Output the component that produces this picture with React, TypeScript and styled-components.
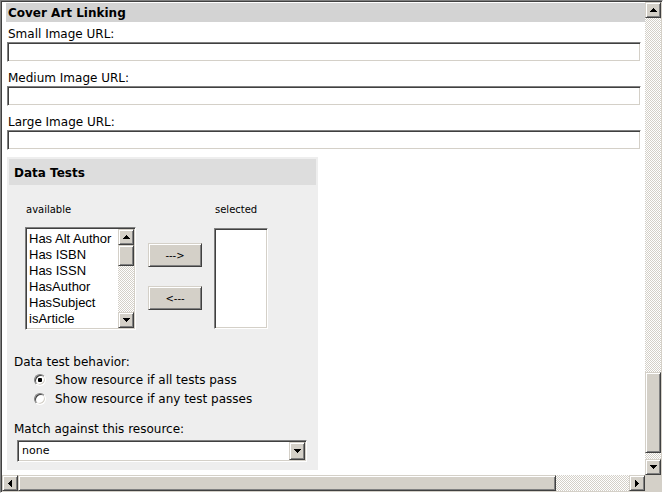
import styled, { createGlobalStyle } from "styled-components";

const GlobalStyle = createGlobalStyle`
  html, body {
    margin: 0;
    padding: 0;
    background: #d4d0c8;
  }
  body {
    width: 663px;
    height: 493px;
    overflow: hidden;
  }
`;

const bevelOut = `
  background-color: #d4d0c8;
  border: 1px solid;
  border-color: #d4d0c8 #404040 #404040 #d4d0c8;
  box-shadow: inset 1px 1px 0 #ffffff, inset -1px -1px 0 #808080;
`;

const bevelIn = `
  border: 1px solid;
  border-color: #808080 #ffffff #ffffff #808080;
  box-shadow: inset 1px 1px 0 #404040, inset -1px -1px 0 #d4d0c8;
`;

const Frame = styled.div`
  box-sizing: border-box;
  width: 663px;
  height: 493px;
  padding: 1px;
  ${bevelIn}
  display: grid;
  grid-template-columns: 1fr 16px;
  grid-template-rows: 1fr 16px;
  background: #d4d0c8;
`;

const Page = styled.div`
  background: #ffffff;
  overflow: hidden;
  padding: 1px 0 0 4px;
  font-family: "DejaVu Sans", Verdana, sans-serif;
  font-size: 12px;
  color: #000000;
`;

const SectionTitle = styled.div`
  background: #d3d3d3;
  font-weight: bold;
  height: 17px;
  padding: 2px 0 0 2px;
  line-height: 17px;
`;

const Fields = styled.div`
  display: flex;
  flex-direction: column;
  gap: 7px;
  padding-top: 3px;
`;

const FieldLabel = styled.div`
  line-height: 16px;
  padding: 1px 0 0 2px;
`;

const TextInput = styled.input`
  display: block;
  box-sizing: border-box;
  width: 634px;
  height: 20px;
  margin: 0 0 0 1px;
  padding: 0 3px;
  background: #ffffff;
  outline: none;
  ${bevelIn}
`;

const Panel = styled.div`
  width: 311px;
  box-sizing: border-box;
  margin: 7px 0 0 1px;
  padding: 2px 2px 8px;
  background: #eeeeee;
`;

const PanelTitle = styled.div`
  background: #dddddd;
  font-weight: bold;
  height: 26px;
  line-height: 28px;
  padding-left: 5px;
`;

const Transfer = styled.div`
  display: grid;
  grid-template-columns: 111px 54px 54px;
  column-gap: 12px;
  row-gap: 11px;
  padding: 19px 0 0 16px;
`;

const SmallLabel = styled.div`
  font-size: 10px;
  line-height: 12px;
  padding-left: 1px;
`;

const ListBox = styled.div`
  box-sizing: border-box;
  width: 111px;
  height: 103px;
  background: #ffffff;
  ${bevelIn}
  padding: 1px;
  display: flex;
`;

const ListItems = styled.div`
  flex: 1;
  overflow: hidden;
  padding: 2px 0 0 2px;
  font-family: "Liberation Sans", Arial, sans-serif;
  font-size: 13px;
  line-height: 16px;
  white-space: nowrap;
`;

const EmptyList = styled.div`
  box-sizing: border-box;
  width: 54px;
  height: 101px;
  margin-top: 1px;
  background: #ffffff;
  ${bevelIn}
`;

const MoveButtons = styled.div`
  display: flex;
  flex-direction: column;
  gap: 19px;
  padding-top: 16px;
`;

const MoveButton = styled.button`
  box-sizing: border-box;
  width: 54px;
  height: 24px;
  padding: 0;
  ${bevelOut}
  font-family: "DejaVu Sans", Verdana, sans-serif;
  font-size: 10px;
  color: #000000;
`;

const Options = styled.div`
  padding: 24px 0 0 5px;
`;

const OptionTitle = styled.div`
  line-height: 16px;
`;

const RadioRow = styled.label`
  display: flex;
  align-items: center;
  gap: 9px;
  height: 19px;
  padding-left: 20px;
`;

const Radio = styled.span<{ $checked?: boolean }>`
  box-sizing: border-box;
  width: 12px;
  height: 12px;
  border-radius: 50%;
  border: 1px solid;
  border-color: #808080 #ffffff #ffffff #808080;
  box-shadow: inset 1px 1px 0 #404040, inset -1px -1px 0 #d4d0c8;
  background: ${(p) =>
    p.$checked
      ? "radial-gradient(circle, #000000 0 2px, #ffffff 2.5px)"
      : "#ffffff"};
`;

const MatchLabel = styled.div`
  line-height: 16px;
  margin-top: 13px;
`;

const Select = styled.div`
  box-sizing: border-box;
  width: 290px;
  height: 22px;
  margin: 3px 0 0 3px;
  padding: 1px;
  background: #ffffff;
  ${bevelIn}
  display: flex;
  align-items: stretch;
  font-size: 11px;
`;

const SelectValue = styled.div`
  flex: 1;
  padding-left: 3px;
  line-height: 18px;
`;

const Track = styled.div<{ $vertical?: boolean }>`
  display: flex;
  flex-direction: ${(p) => (p.$vertical ? "column" : "row")};
  min-width: 0;
  min-height: 0;
`;

const Trough = styled.div<{ $vertical?: boolean }>`
  flex: 1;
  display: flex;
  flex-direction: ${(p) => (p.$vertical ? "column" : "row")};
  background-color: #ffffff;
  background-image: repeating-conic-gradient(#d4d0c8 0 25%, #ffffff 0 50%);
  background-size: 2px 2px;
`;

const ArrowButton = styled.div`
  flex: none;
  box-sizing: border-box;
  width: 16px;
  height: 16px;
  ${bevelOut}
  display: flex;
  align-items: center;
  justify-content: center;
  svg {
    display: block;
  }
`;

const SelectButton = styled(ArrowButton)`
  height: auto;
`;

const Thumb = styled.div<{ $vertical?: boolean; $start: number; $size: number }>`
  flex: none;
  box-sizing: border-box;
  ${bevelOut}
  ${(p) =>
    p.$vertical
      ? `width: 16px; height: ${p.$size}px; margin-top: ${p.$start}px;`
      : `height: 16px; width: ${p.$size}px; margin-left: ${p.$start}px;`}
`;

const Corner = styled.div`
  background: #d4d0c8;
`;

type Dir = "up" | "down" | "left" | "right";

const arrowPaths: Record<Dir, { w: number; h: number; d: string }> = {
  up: { w: 7, h: 4, d: "M3 0h1v1h1v1h1v1h1v1H0V3h1V2h1V1h1z" },
  down: { w: 7, h: 4, d: "M0 0h7v1H6v1H5v1H4v1H3V3H2V2H1V1H0z" },
  left: { w: 4, h: 7, d: "M3 0h1v7H3V6H2V5H1V4H0V3h1V2h1V1h1z" },
  right: { w: 4, h: 7, d: "M0 0h1v1h1v1h1v1h1v1H3v1H2v1H1v1H0z" },
};

function Arrow({ dir }: { dir: Dir }) {
  const a = arrowPaths[dir];
  return (
    <svg width={a.w} height={a.h} viewBox={`0 0 ${a.w} ${a.h}`} shapeRendering="crispEdges">
      <path d={a.d} fill="#000" />
    </svg>
  );
}

function ScrollBar({
  vertical,
  start,
  size,
}: {
  vertical?: boolean;
  start: number;
  size: number;
}) {
  return (
    <Track $vertical={vertical}>
      <ArrowButton>
        <Arrow dir={vertical ? "up" : "left"} />
      </ArrowButton>
      <Trough $vertical={vertical}>
        <Thumb $vertical={vertical} $start={start} $size={size} />
      </Trough>
      <ArrowButton>
        <Arrow dir={vertical ? "down" : "right"} />
      </ArrowButton>
    </Track>
  );
}

const tests = ["Has Alt Author", "Has ISBN", "Has ISSN", "HasAuthor", "HasSubject", "isArticle"];

export default function App() {
  return (
    <>
      <GlobalStyle />
      <Frame>
        <Page>
          <SectionTitle>Cover Art Linking</SectionTitle>
          <Fields>
            <div>
              <FieldLabel>Small Image URL:</FieldLabel>
              <TextInput type="text" />
            </div>
            <div>
              <FieldLabel>Medium Image URL:</FieldLabel>
              <TextInput type="text" />
            </div>
            <div>
              <FieldLabel>Large Image URL:</FieldLabel>
              <TextInput type="text" />
            </div>
          </Fields>
          <Panel>
            <PanelTitle>Data Tests</PanelTitle>
            <Transfer>
              <SmallLabel>available</SmallLabel>
              <div />
              <SmallLabel>selected</SmallLabel>
              <ListBox>
                <ListItems>
                  {tests.map((t) => (
                    <div key={t}>{t}</div>
                  ))}
                </ListItems>
                <ScrollBar vertical start={0} size={21} />
              </ListBox>
              <MoveButtons>
                <MoveButton>---&gt;</MoveButton>
                <MoveButton>&lt;---</MoveButton>
              </MoveButtons>
              <EmptyList />
            </Transfer>
            <Options>
              <OptionTitle>Data test behavior:</OptionTitle>
              <RadioRow>
                <Radio $checked />
                Show resource if all tests pass
              </RadioRow>
              <RadioRow>
                <Radio />
                Show resource if any test passes
              </RadioRow>
              <MatchLabel>Match against this resource:</MatchLabel>
              <Select>
                <SelectValue>none</SelectValue>
                <SelectButton>
                  <Arrow dir="down" />
                </SelectButton>
              </Select>
            </Options>
          </Panel>
        </Page>
        <ScrollBar vertical start={354} size={81} />
        <ScrollBar start={0} size={538} />
        <Corner />
      </Frame>
    </>
  );
}
